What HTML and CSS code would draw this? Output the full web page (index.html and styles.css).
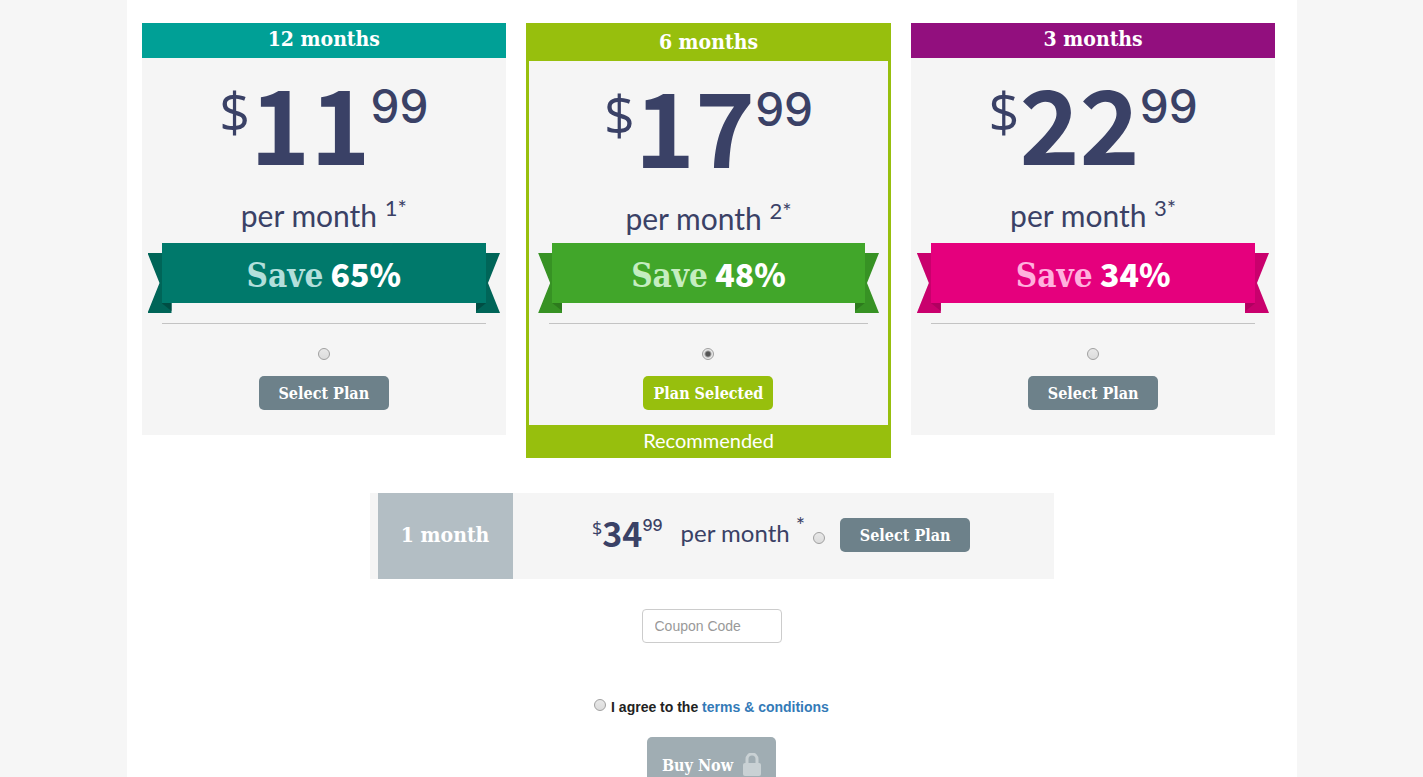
FILE: index.html
```
<!DOCTYPE html>
<html lang="en">
<head>
<meta charset="UTF-8">
<meta name="viewport" content="width=device-width, initial-scale=1.0">
<title>Choose your plan</title>
<link rel="stylesheet" href="styles.css">
</head>
<body>
<form class="container">
  <div class="plans">
    <section class="plan plan-teal">
      <h2 class="plan-title">12 months</h2>
      <div class="plan-body">
        <div class="price"><span class="currency">$</span><span class="amount">11</span><span class="cents">99</span></div>
        <p class="period">per month <sup>1*</sup></p>
        <div class="ribbon"><div class="ribbon-face"><span class="save">Save</span> <b>65%</b></div></div>
        <hr>
        <input type="radio" name="plan" value="12" aria-label="12 months">
        <button type="button" class="btn">Select Plan</button>
      </div>
    </section>

    <section class="plan plan-green selected">
      <h2 class="plan-title">6 months</h2>
      <div class="plan-body">
        <div class="price"><span class="currency">$</span><span class="amount">17</span><span class="cents">99</span></div>
        <p class="period">per month <sup>2*</sup></p>
        <div class="ribbon"><div class="ribbon-face"><span class="save">Save</span> <b>48%</b></div></div>
        <hr>
        <input type="radio" name="plan" value="6" aria-label="6 months" checked>
        <button type="button" class="btn">Plan Selected</button>
      </div>
      <div class="recommended">Recommended</div>
    </section>

    <section class="plan plan-pink">
      <h2 class="plan-title">3 months</h2>
      <div class="plan-body">
        <div class="price"><span class="currency">$</span><span class="amount">22</span><span class="cents">99</span></div>
        <p class="period">per month <sup>3*</sup></p>
        <div class="ribbon"><div class="ribbon-face"><span class="save">Save</span> <b>34%</b></div></div>
        <hr>
        <input type="radio" name="plan" value="3" aria-label="3 months">
        <button type="button" class="btn">Select Plan</button>
      </div>
    </section>
  </div>

  <section class="single">
    <h2 class="single-title">1 month</h2>
    <div class="single-body">
      <div class="price price-small"><span class="currency">$</span><span class="amount">34</span><span class="cents">99</span></div>
      <p class="period period-small">per month <sup>*</sup></p>
      <input type="radio" name="plan" value="1" aria-label="1 month">
      <button type="button" class="btn">Select Plan</button>
    </div>
  </section>

  <div class="checkout">
    <input type="text" class="coupon" placeholder="Coupon Code" aria-label="Coupon Code">
    <div class="terms">
      <input type="radio" id="agree" name="agree">
      <label for="agree">I agree to the <a href="#terms">terms &amp; conditions</a></label>
    </div>
    <button type="submit" class="buy">
      Buy Now
      <svg width="18" height="24" viewBox="0 0 18 24" aria-hidden="true">
        <path d="M4 12V6a5 5 0 0 1 10 0v6" fill="none" stroke="#c9d1d4" stroke-width="3"/>
        <rect x="0" y="10" width="18" height="13" rx="2" fill="#c9d1d4"/>
      </svg>
    </button>
  </div>
</form>
</body>
</html>
```
FILE: styles.css
```
* {
  box-sizing: border-box;
}
body {
  margin: 0;
  background: #f6f6f6;
  color: #3a4166;
  font-family: "Liberation Sans", Arial, sans-serif;
  font-size: 14px;
}
h2, p {
  margin: 0;
  font-weight: normal;
}
.container {
  max-width: 1170px;
  min-height: 100vh;
  margin: 0 auto;
  padding: 23px 15px 24px;
  background: #fff;
}

/* plan cards */
.plans {
  display: grid;
  grid-template-columns: repeat(3, 1fr);
  gap: 20px;
  align-items: start;
  padding-right: 6px;
}
.plan {
  background: #f5f5f5;
  text-align: center;
}
.plan-teal {
  --head: #00a096;
  --ribbon: #00796b;
  --wing: #006558;
  --fold: #004d43;
  --save: #b2dfdb;
}
.plan-green {
  --head: #97bf0d;
  --ribbon: #41a62a;
  --wing: #379224;
  --fold: #2d7a1d;
  --save: #c5edc0;
}
.plan-pink {
  --head: #920f7e;
  --ribbon: #e5007d;
  --wing: #c9006d;
  --fold: #b00060;
  --save: #ffb0dd;
}
.selected {
  border: 3px solid var(--head);
}
.plan-title, .single-title {
  color: #fff;
  font: bold 21px "DejaVu Serif Condensed", "DejaVu Serif", serif;
  font-stretch: condensed;
}
.plan-title {
  height: 35px;
  background: var(--head);
  line-height: 32px;
}
.plan-body {
  display: flex;
  flex-direction: column;
  align-items: center;
  padding: 0 20px 25px;
}
.selected .plan-body {
  padding-bottom: 15px;
}
.price {
  display: flex;
  align-items: flex-start;
  justify-content: center;
}
.currency {
  font: 54px/106px "Open Sans", sans-serif;
}
.amount {
  font: bold 102px/125px "Noto Sans CJK SC", sans-serif;
}
.cents {
  font: 500 46px/97px Inter, sans-serif;
}
.period {
  height: 60px;
  font: 30px/64px Lato, sans-serif;
}
.selected .period {
  height: 57px;
}
.period sup {
  font-size: 22px;
  line-height: 0;
}

/* ribbon with folded tails */
.ribbon {
  position: relative;
  align-self: stretch;
  margin-bottom: 20px;
}
.selected .ribbon {
  margin-left: 3px;
  margin-right: 3px;
}
.ribbon::before, .ribbon::after {
  content: "";
  position: absolute;
  top: 10px;
  width: 24px;
  height: 60px;
  background: var(--wing);
  clip-path: polygon(0 0, 100% 0, 100% 100%, 0 100%, 12px 50%);
}
.ribbon::before {
  left: -14px;
}
.ribbon::after {
  right: -14px;
  transform: scaleX(-1);
}
.ribbon-face {
  position: relative;
  z-index: 1;
  height: 60px;
  background: var(--ribbon);
  color: #fff;
  font: bold 32px/60px "Noto Sans CJK SC", sans-serif;
}
.ribbon-face::before, .ribbon-face::after {
  content: "";
  position: absolute;
  top: 100%;
  width: 10px;
  height: 8px;
  background: var(--fold);
}
.ribbon-face::before {
  left: 0;
  clip-path: polygon(0 0, 100% 0, 100% 100%);
}
.ribbon-face::after {
  right: 0;
  clip-path: polygon(0 0, 100% 0, 0 100%);
}
.save {
  color: var(--save);
  font: bold 33px "DejaVu Serif Condensed", "DejaVu Serif", serif;
  font-stretch: condensed;
  line-height: 56px;
}
hr {
  width: 100%;
  margin: 0 0 24px;
  border: 0;
  border-top: 1px solid #c3c3c3;
}

/* controls */
input[type="radio"] {
  appearance: none;
  width: 12px;
  height: 12px;
  margin: 0;
  border: 1px solid #a0a0a0;
  border-radius: 50%;
  background: linear-gradient(#e8e8e8, #dcdcdc);
}
input[type="radio"]:checked {
  background: radial-gradient(circle, #555 0, #555 2px, #e8e8e8 4px);
}
.btn {
  width: 130px;
  height: 34px;
  padding: 0;
  border: 0;
  border-radius: 5px;
  background: #6d818a;
  color: #fff;
  font: bold 16px "DejaVu Serif Condensed", "DejaVu Serif", serif;
  font-stretch: condensed;
  cursor: pointer;
}
.plan .btn {
  margin-top: 16px;
}
.selected .btn {
  background: var(--head);
}
.recommended {
  background: var(--head);
  color: #fff;
  font: 20px/30px Lato, sans-serif;
}

/* one month bar */
.single {
  display: flex;
  width: 60%;
  min-height: 86px;
  margin: 35px auto 30px;
  padding-left: 8px;
  background: #f5f5f5;
}
.single-title {
  display: flex;
  align-items: center;
  justify-content: center;
  flex: 0 0 20%;
  padding-bottom: 4px;
  background: #b3bec4;
}
.single-body {
  display: flex;
  flex: 1;
  align-items: center;
  justify-content: center;
  padding: 0 4px 2px 0;
}
.price-small {
  padding-bottom: 4px;
}
.price-small .currency {
  font-size: 18px;
  line-height: 30px;
}
.price-small .amount {
  font-size: 34px;
  line-height: 40px;
}
.price-small .cents {
  font-size: 16px;
  line-height: 24px;
}
.period-small {
  height: auto;
  margin: 0 8px 0 18px;
  padding-bottom: 4px;
  font-size: 24px;
  line-height: 40px;
}
.single input {
  margin-top: 6px;
}
.single .btn {
  margin-left: 15px;
}

/* coupon, terms, buy */
.checkout {
  display: flex;
  flex-direction: column;
  align-items: center;
}
.coupon {
  width: 140px;
  height: 34px;
  padding: 6px 12px;
  border: 1px solid #ccc;
  border-radius: 4px;
  font: 14px "Liberation Sans", Arial, sans-serif;
}
.coupon::placeholder {
  color: #999;
}
.terms {
  display: flex;
  align-items: flex-start;
  gap: 5px;
  margin: 54px 0 20px;
  color: #222;
  font-weight: bold;
  line-height: 20px;
}
.terms input {
  margin-top: 2px;
}
.terms a {
  color: #337ab7;
  text-decoration: none;
}
.buy {
  display: flex;
  align-items: center;
  justify-content: center;
  gap: 10px;
  width: 129px;
  height: 56px;
  padding: 0;
  border: 0;
  border-radius: 5px;
  background: #a0adb3;
  color: #fff;
  font: bold 16px "DejaVu Serif Condensed", "DejaVu Serif", serif;
  font-stretch: condensed;
}
```
